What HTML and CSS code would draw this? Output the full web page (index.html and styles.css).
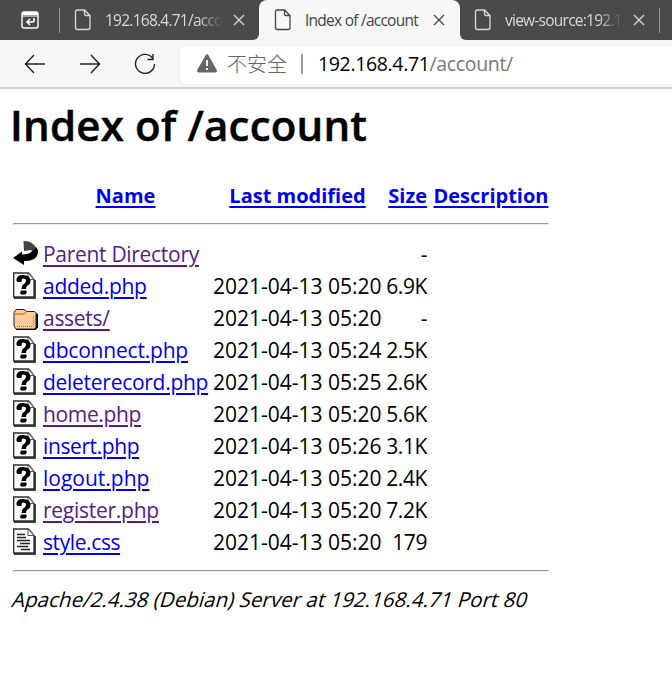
FILE: index.html
```html
<!DOCTYPE html>
<html lang="zh-CN">
<head>
<meta charset="utf-8">
<title>Index of /account</title>
<link rel="stylesheet" href="styles.css">
</head>
<body>
<svg class="symbols" aria-hidden="true">
  <symbol id="page" viewBox="0 0 18 22"><path d="M3.5 1H10.5L16 6.5V18.5Q16 20.5 14 20.5H3.5Q1.5 20.5 1.5 18.5V3Q1.5 1 3.5 1ZM10.5 1V5Q10.5 6.5 12 6.5H16" fill="none" stroke="currentColor" stroke-width="1.3"/></symbol>
  <symbol id="close" viewBox="0 0 12 12"><path d="M1 1L11 11M11 1L1 11" fill="none" stroke="currentColor" stroke-width="1.25"/></symbol>
  <symbol id="sheet" viewBox="0 0 25 28"><path d="M22 8V26H1" fill="none" stroke="#000" stroke-width="1.5"/><path d="M.7 1H15.500L21 7.500V25H.7Z" fill="#fff" stroke="#333" stroke-width="1.4"/><path d="M15 1V7.500H21Z" fill="#fff" stroke="#555"/></symbol>
  <symbol id="unknown" viewBox="0 0 25 28"><use href="#sheet"/><path d="M3.500 9V7Q4 3 10 3Q17.500 3 17.500 9Q17.500 12 14.500 13.500Q13 14.500 13 17H8.500Q8.500 13 11.500 11.500Q13 10.500 13 8.500Q13 6.500 10.500 6.500Q8.500 6.500 8.500 10H4.500Z"/><path d="M8 18.500H13L14 20L12.500 22.500H8L7 21Z"/></symbol>
  <symbol id="text" viewBox="0 0 25 28"><use href="#sheet"/><path d="M4 6.500H12M4 9.500H13M4 12.500H17M7 15.500H17M4 18.500H15M8 21.500H17" fill="none" stroke="#222" stroke-width="1.6"/></symbol>
  <symbol id="folder" viewBox="0 0 25 28"><path d="M3 26H22.500L25 23.500V10.500L23 8.500V24H3Z"/><path d="M1 22V8.500L3 5.500H11L13.500 7.500H21.500L23 9.500V23L21.500 25H3Z" fill="#ffcc99" stroke="#222"/><path d="M2 10H11L13.500 8" fill="none" stroke="#a66a38"/><path d="M4 22.500H20.500V12" fill="none" stroke="#a66a38" stroke-dasharray="1 1"/></symbol>
  <symbol id="back" viewBox="0 0 25 28"><path d="M10.500 1Q19 .5 23.500 8L24 11L18 10L11 11Z" fill="#444"/><path d="M17 11Q22 10 23 7L25 10Q25.500 16 21 19Q17 21.500 11 21V25L0 18L9 11.500V14.500Q16 14.500 19.500 11Z"/></symbol>
</svg>
<header class="browser">
  <div class="tabs">
    <div class="pinned">
      <svg width="18" height="18" viewBox="0 0 18 18"><path d="M1 4V3Q1 1 3 1H15Q17 1 17 3V4Z" fill="#fff"/><rect x="1" y="1" width="16" height="16" rx="2" fill="none" stroke="#fff" stroke-width="1.4"/><path d="M1 5H17" stroke="#fff"/><path d="M13 7V9.500Q13 11 11.500 11H6M9 8L6 11L9 14" fill="none" stroke="#fff" stroke-width="1.6"/></svg>
    </div>
    <div class="tab first"><svg class="doc"><use href="#page"/></svg><span class="title fade">192.168.4.71/acco</span><svg class="x"><use href="#close"/></svg></div>
    <div class="tab active"><svg class="doc"><use href="#page"/></svg><span class="title">Index of /account</span><svg class="x"><use href="#close"/></svg></div>
    <div class="tab last"><svg class="doc"><use href="#page"/></svg><span class="title fade source">view-source:192.1</span><svg class="x"><use href="#close"/></svg></div>
  </div>
  <div class="toolbar">
    <svg class="nav" viewBox="0 0 22 22"><path d="M21 11H1.500M10 2L1.500 11L10 20"/></svg>
    <svg class="nav" viewBox="0 0 22 22"><path d="M1 11H20.500M12 2L20.500 11L12 20"/></svg>
    <svg class="nav" viewBox="0 0 22 22"><path d="M18.500 5A9.500 9.500 0 1 0 20.500 11M19 1V6.500H13.500"/></svg>
    <div class="address">
      <svg class="warning" viewBox="0 0 20 19"><path d="M8.700 1Q10 -.5 11.300 1L20 16.500Q20 18.500 18 18.500H2Q0 18.500 0 16.500Z" fill="#666"/><path d="M10 6V12M10 14V16" stroke="#fff" stroke-width="1.800"/></svg>
      <span class="insecure">不安全</span><i></i><span class="url"><b>192.168.4.71</b>/account/</span>
    </div>
  </div>
</header>
<main>
  <h1>Index of /account</h1>
  <div class="listing">
    <div class="row head"><a class="name" href="#">Name</a><a class="date" href="#">Last modified</a><a class="size" href="#">Size</a><a class="desc" href="#">Description</a></div>
    <hr>
    <div class="row"><svg><use href="#back"/></svg><a class="visited n1" href="#">Parent Directory</a><span></span><span class="size dash">-</span></div>
    <div class="row"><svg><use href="#unknown"/></svg><a class="n2" href="#">added.php</a><span class="date">2021-04-13 05:20</span><span class="size">6.9K</span></div>
    <div class="row"><svg><use href="#folder"/></svg><a class="visited n3" href="#">assets/</a><span class="date">2021-04-13 05:20</span><span class="size dash">-</span></div>
    <div class="row"><svg><use href="#unknown"/></svg><a class="n4" href="#">dbconnect.php</a><span class="date">2021-04-13 05:24</span><span class="size">2.5K</span></div>
    <div class="row"><svg><use href="#unknown"/></svg><a class="n5" href="#">deleterecord.php</a><span class="date">2021-04-13 05:25</span><span class="size">2.6K</span></div>
    <div class="row"><svg><use href="#unknown"/></svg><a class="visited n6" href="#">home.php</a><span class="date">2021-04-13 05:20</span><span class="size">5.6K</span></div>
    <div class="row"><svg><use href="#unknown"/></svg><a class="n7" href="#">insert.php</a><span class="date">2021-04-13 05:26</span><span class="size">3.1K</span></div>
    <div class="row"><svg><use href="#unknown"/></svg><a class="n8" href="#">logout.php</a><span class="date">2021-04-13 05:20</span><span class="size">2.4K</span></div>
    <div class="row"><svg><use href="#unknown"/></svg><a class="visited n9" href="#">register.php</a><span class="date">2021-04-13 05:20</span><span class="size">7.2K</span></div>
    <div class="row"><svg><use href="#text"/></svg><a class="n10" href="#">style.css</a><span class="date">2021-04-13 05:20</span><span class="size">179</span></div>
    <hr class="end">
  </div>
  <address>Apache/2.4.38 (Debian) Server at 192.168.4.71 Port 80</address>
</main>
</body>
</html>
```

FILE: styles.css
```css
* { box-sizing: border-box; }
body { margin: 0; background: #fff; color: #000; font-family: "Open Sans", "Noto Sans", "Noto Sans CJK SC", sans-serif; overflow: hidden; }
svg { display: block; flex: none; }
.symbols { position: absolute; width: 0; height: 0; }
.browser { height: 89px; background: #f7f7f7; border-bottom: 2px solid #d0d0d0; }
.tabs { height: 40px; display: flex; background: #f7f7f7; color: #d8d8d8; }
.pinned { width: 59px; padding: 11px 0 0 21px; background: #4a4a4a; }
.tab { height: 40px; display: flex; align-items: center; }
.first { width: 200px; padding-left: 15px; background: linear-gradient(#999, #999) 0 8px / 1px 25px no-repeat #4a4a4a; border-bottom-right-radius: 6px; }
.active { width: 201px; padding-left: 15px; background: #f7f7f7; color: #444; box-shadow: 0 -10px 0 #4a4a4a; border-radius: 8px 8px 0 0; }
.last { flex: 1; padding-left: 14px; background: linear-gradient(#999, #999) 199px 8px / 1px 25px no-repeat #4a4a4a; border-bottom-left-radius: 6px; }
.doc { width: 18px; height: 22px; }
.title { width: 118px; margin: -1px 0 0 13px; font-size: 15.5px; line-height: 22px; letter-spacing: -.75px; white-space: nowrap; }
.fade { -webkit-mask-image: linear-gradient(90deg, #000 78%, transparent); mask-image: linear-gradient(90deg, #000 78%, transparent); }
.x { width: 12px; height: 12px; margin-left: 10px; }
.toolbar { height: 47px; display: flex; align-items: center; padding-left: 24px; }
.nav { width: 22px; height: 22px; margin-right: 33px; fill: none; stroke: #222; stroke-width: 1.4; }
.address { flex: 1; height: 38px; margin: 2px 0 0 -9px; padding-left: 17px; display: flex; align-items: center; border-radius: 6px 0 0 6px; background: #fff; box-shadow: 0 0 3px #e5e5e5; }
.warning { width: 20px; height: 19px; margin: -2px 10px 0 0; }
.insecure { margin-top: -2px; font-family: "Noto Sans CJK SC", sans-serif; font-weight: 300; font-size: 20px; color: #666; }
.address i { width: 2px; height: 20px; margin: -1px 15px 0 14px; background: #999; }
.url { margin-top: -2px; font-size: 19.5px; letter-spacing: -.35px; color: #777; }
.url b { font-weight: 400; color: #000; }
main { padding: 6px 11px; }
h1 { height: 61px; margin: 0 0 0 -1px; font-size: 42px; line-height: 60px; font-weight: 600; letter-spacing: .2px; white-space: nowrap; -webkit-text-stroke: .5px #000; }
.listing { width: 538px; padding: 24px 0 0 2px; }
.row { height: 32px; display: grid; grid-template-columns: 25px 165px 169px 41px 116px; column-gap: 5px; font-size: 21px; line-height: 31px; white-space: nowrap; }
.row svg { width: 25px; height: 28px; margin-top: 1px; }
.row a { color: #00e; text-decoration: underline; text-decoration-thickness: 2px; text-underline-offset: 3px; justify-self: start; }
.row .visited { color: #551a8b; text-decoration-thickness: 1.5px; }
.row .size { text-align: right; justify-self: end; margin-right: 1px; letter-spacing: -.4px; }
.row .n1 { letter-spacing: -.3px; }
.row .n2 { letter-spacing: -.27px; }
.row .n3 { letter-spacing: -.28px; }
.row .n4 { letter-spacing: -.2px; }
.row .n5 { letter-spacing: -.28px; }
.row .n6 { letter-spacing: -.35px; }
.row .n7 { letter-spacing: -.4px; }
.row .n9 { letter-spacing: -.26px; }
.row .n10 { letter-spacing: -.4px; }
.row.head { font-weight: 700; font-size: 20px; line-height: 32px; }
.head .name { grid-column: 2; }
.head a.name, .head a.date, .head a.desc { justify-self: center; }
.row.head a.size { letter-spacing: 0; }
hr { height: 2px; margin: 11px 0 14px; border: 1px solid; border-color: #999 #eee #eee #999; }
.end { margin: 11px 0 12px; }
address { width: max-content; margin-left: 2px; font-size: 20.5px; line-height: 30px; letter-spacing: .03px; font-style: normal; white-space: nowrap; transform: skewX(-16deg); }
```
